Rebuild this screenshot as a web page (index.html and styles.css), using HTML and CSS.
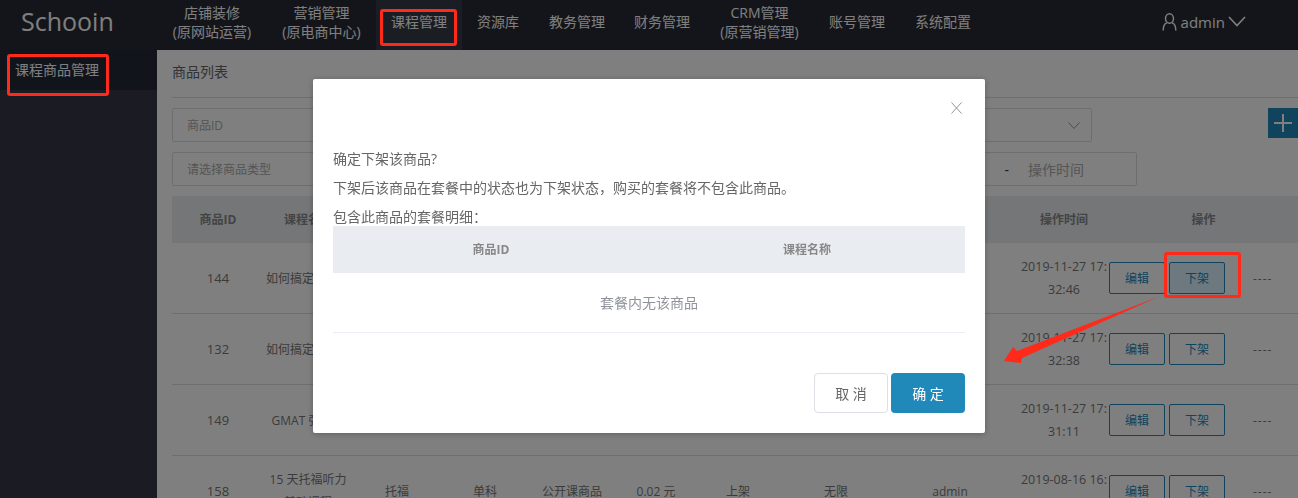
FILE: index.html
```html
<!DOCTYPE html>
<html>
<head>
  <meta charset="UTF-8">
  <title>Schooin - 课程商品管理</title>
  <link rel="stylesheet" href="styles.css">
</head>
<body>
  <header class="top-bar">
    <div class="logo">Schooin</div>
    <nav class="top-nav">
      <a class="wide-a">店铺装修<br>(原网站运营)</a>
      <a class="wide-b">营销管理<br>(原电商中心)</a>
      <a class="active">课程管理</a>
      <a>资源库</a>
      <a class="narrow">教务管理</a>
      <a>财务管理</a>
      <a class="wide-b">CRM管理<br>(原营销管理)</a>
      <a>账号管理</a>
      <a>系统配置</a>
    </nav>
    <div class="user">
      <svg width="17" height="18" viewBox="0 0 17 18" fill="none" stroke="currentColor" stroke-width="1.5"><ellipse cx="8.5" cy="5.5" rx="4" ry="4.7"/><path d="M2.2 17.5c0-4.2 2-7 3.6-7.6M14.8 17.5c0-4.2-2-7-3.6-7.6"/></svg>
      <span class="user-name">admin</span>
      <svg width="18" height="11" viewBox="0 0 18 11" fill="none" stroke="currentColor" stroke-width="1.6"><path d="M1 1l8 8.5L17 1"/></svg>
    </div>
  </header>

  <div class="body-wrap">
    <aside class="side-bar">
      <div class="side-item">课程商品管理</div>
    </aside>

    <main class="content">
      <div class="page-title">商品列表</div>

      <div class="filter-row">
        <div class="filter-fields first">
          <div class="field wide">商品ID</div>
          <div class="field grow">
            <svg class="field-arrow" width="12" height="7" viewBox="0 0 12 7" fill="none" stroke="currentColor"><path d="M.5.5l5.5 6 5.5-6"/></svg>
          </div>
        </div>
        <button class="add-btn"><svg width="20" height="20" viewBox="0 0 20 20" stroke="currentColor" stroke-width="2"><path d="M10 1v18M1 10h18"/></svg></button>
      </div>
      <div class="filter-row">
        <div class="filter-fields second">
          <div class="field wide">请选择商品类型</div>
          <div class="field grow date"><span class="dash">-</span><span class="date-end">操作时间</span></div>
        </div>
      </div>

      <div class="grid-table">
        <div class="grid-row head">
          <div>商品ID</div><div>课程名称</div><div></div><div></div><div></div><div></div><div></div><div></div><div></div><div class="time">操作时间</div><div>操作</div>
        </div>
        <div class="grid-row">
          <div>144</div><div>如何搞定听力题</div><div></div><div></div><div></div><div></div><div></div><div></div><div></div><div class="time">2019-11-27 17:<br>32:46</div>
          <div class="ops"><button class="btn-line">编辑</button><button class="btn-line hover">下架</button><span class="dashes">----</span></div>
        </div>
        <div class="grid-row">
          <div>132</div><div>如何搞定口语题</div><div></div><div></div><div></div><div></div><div></div><div></div><div></div><div class="time">2019-11-27 17:<br>32:38</div>
          <div class="ops"><button class="btn-line">编辑</button><button class="btn-line">下架</button><span class="dashes">----</span></div>
        </div>
        <div class="grid-row">
          <div>149</div><div>GMAT 强化班</div><div></div><div></div><div></div><div></div><div></div><div></div><div></div><div class="time">2019-11-27 17:<br>31:11</div>
          <div class="ops"><button class="btn-line">编辑</button><button class="btn-line">下架</button><span class="dashes">----</span></div>
        </div>
        <div class="grid-row">
          <div>158</div><div>15 天托福听力<br>基础课程</div><div>托福</div><div>单科</div><div>公开课商品</div><div>0.02 元</div><div>上架</div><div>无限</div><div>admin</div><div class="time">2019-08-16 16:<br>20:15</div>
          <div class="ops"><button class="btn-line">编辑</button><button class="btn-line">下架</button><span class="dashes">----</span></div>
        </div>
      </div>
    </main>
  </div>

  <div class="overlay">
    <div class="modal">
      <div class="modal-close">
        <svg width="11" height="12" viewBox="0 0 11 12" fill="none" stroke="currentColor"><path d="M.5.5l10 11M10.5.5l-10 11"/></svg>
      </div>
      <div class="modal-body">
        <p>确定下架该商品?</p>
        <p>下架后该商品在套餐中的状态也为下架状态&#xFF0C;购买的套餐将不包含此商品。</p>
        <p>包含此商品的套餐明细&#xFF1A;</p>
        <div class="modal-table">
          <div class="modal-head"><div>商品ID</div><div>课程名称</div></div>
          <div class="modal-empty">套餐内无该商品</div>
        </div>
      </div>
      <div class="modal-foot">
        <button class="btn-cancel">取 消</button>
        <button class="btn-ok">确 定</button>
      </div>
    </div>
  </div>

  <!-- red marks drawn on top of the screenshot -->
  <div class="mark mark-nav"></div>
  <div class="mark mark-side"></div>
  <div class="mark mark-op"></div>
  <svg class="mark-arrow" width="1298" height="498" viewBox="0 0 1298 498"><polygon fill="#ff2a1a" points="1004,361 1013,347 1017,351 1158,297 1022,358 1021,363"/></svg>
</body>
</html>
```

FILE: styles.css
```css
* { box-sizing: border-box; }
html, body { height: 100%; }
body {
  margin: 0;
  overflow: hidden;
  background: #fff;
  color: #666;
  font-family: "Open Sans", "Noto Sans CJK SC", sans-serif;
  font-size: 14px;
}
button { font-family: inherit; cursor: pointer; }

/* --- TOP BAR --- */
.top-bar {
  display: flex;
  align-items: center;
  height: 50px;
  background: #282a34;
  color: #fff;
}
.logo {
  width: 157px;
  padding: 0 0 9px 21px;
  font-size: 25px;
}
.top-nav { display: flex; height: 100%; }
.top-nav a {
  display: flex;
  align-items: center;
  justify-content: center;
  padding: 0 15px 7px;
  line-height: 19px;
  text-align: center;
}
.top-nav a.wide-a { width: 110px; }
.top-nav a.wide-b { width: 109px; }
.top-nav a.narrow { padding-right: 14px; }
.top-nav a.active { background: #363a48; }
.user {
  display: flex;
  align-items: center;
  gap: 3px;
  margin-left: auto;
  margin-bottom: 7px;
  padding-right: 52px;
}
.user-name { font-size: 15px; }

/* --- LAYOUT --- */
.body-wrap { display: flex; height: 448px; }
.side-bar { flex: 0 0 157px; background: #343647; color: #fff; }
.side-item {
  height: 40px;
  padding-left: 15px;
  line-height: 40px;
  background: #242838;
}
.content { flex: 1; min-width: 0; padding-left: 15px; overflow: hidden; }
.page-title {
  height: 48px;
  padding-top: 12px;
  line-height: 20px;
  border-bottom: 1px solid #ddd;
  margin-bottom: 10px;
}

/* --- FILTERS --- */
.filter-row { display: flex; height: 34px; margin-bottom: 10px; }
.filter-fields { display: flex; gap: 10px; }
.filter-fields.first { width: 920px; }
.filter-fields.second { width: 965px; }
.field {
  position: relative;
  border: 1px solid #ddd;
  border-radius: 2px;
  padding-left: 15px;
  line-height: 33px;
  font-size: 12px;
  color: #aaa;
}
.field.wide { flex: 0 0 300px; padding-left: 14px; }
.field.grow { flex: 1; }
.field-arrow { position: absolute; right: 11px; top: 13px; color: #999; }
.field.date { display: flex; justify-content: flex-end; padding-right: 52px; font-size: 14px; }
.dash { margin-right: 19px; color: #333; }
.add-btn {
  display: flex;
  align-items: center;
  justify-content: center;
  flex: 0 0 30px;
  height: 30px;
  margin-left: auto;
  padding: 0;
  border: 0;
  background: #2089ba;
  color: #fff;
}

/* --- TABLE --- */
.grid-row {
  display: grid;
  grid-template-columns: 92px 88px 90px 86px 88px 80px 84px 112px 116px 112px 1fr;
  align-items: center;
  height: 71px;
  border-bottom: 1px solid #ddd;
  text-align: center;
  font-size: 12px;
  line-height: 23px;
  color: #777;
}
.grid-row.head {
  height: 47px;
  border-bottom: 0;
  background: #e9ecf0;
  font-weight: bold;
  color: #888;
}
.grid-row > div:first-child { font-size: 13px; }
.grid-row.head > div:first-child { font-size: 12px; }
.time { padding: 0 11px; font-size: 12.5px; white-space: nowrap; }
.head .time { font-size: 12px; }
.head .time + div { margin-left: -11px; }
.ops { display: flex; align-items: center; margin-left: -11px; }
.btn-line {
  width: 56px;
  height: 32px;
  margin-right: 4px;
  padding: 0;
  border: 1px solid #2089ba;
  border-radius: 2px;
  background: transparent;
  font-size: 12px;
  color: #2089ba;
}
.btn-line.hover { background: #dcf0ff; }
.dashes { margin-left: 24px; letter-spacing: 1px; }

/* --- MODAL --- */
.overlay {
  position: fixed;
  top: 0;
  left: 0;
  right: 0;
  bottom: 0;
  display: flex;
  justify-content: center;
  align-items: flex-start;
  padding-top: 79px;
  background: rgba(0, 0, 0, .5);
}
.modal {
  width: 672px;
  height: 354px;
  padding: 0 20px;
  border-radius: 2px;
  background: #fff;
  box-shadow: 0 1px 6px rgba(0, 0, 0, .25);
}
.modal-close {
  display: flex;
  justify-content: flex-end;
  height: 70px;
  padding: 23px 3px 0 0;
  color: #8e959f;
}
.modal-body p { margin: 0 0 9px; line-height: 20px; color: #666; }
.modal-body p:last-of-type { margin-bottom: 0; line-height: 19px; }
.modal-head {
  display: grid;
  grid-template-columns: 1fr 1fr;
  height: 47px;
  line-height: 47px;
  background: #e9ecf0;
  text-align: center;
  font-size: 12px;
  font-weight: bold;
  color: #888;
}
.modal-empty {
  height: 60px;
  line-height: 60px;
  border-bottom: 1px solid #eceef3;
  text-align: center;
  color: #8f9399;
}
.modal-foot {
  display: flex;
  justify-content: flex-end;
  gap: 3px;
  margin-top: 40px;
}
.modal-foot button {
  width: 74px;
  height: 40px;
  border-radius: 4px;
  font-size: 14px;
}
.btn-cancel { border: 1px solid #dddee6; background: #fff; color: #666; }
.btn-ok { border: 0; background: #2089ba; color: #fff; }

/* --- RED MARKS --- */
.mark {
  position: absolute;
  border: 3px solid #ff2a1a;
  border-radius: 3px;
}
.mark-nav { left: 380px; top: 9px; width: 77px; height: 37px; }
.mark-side { left: 7px; top: 54px; width: 102px; height: 42px; }
.mark-op { left: 1164px; top: 252px; width: 77px; height: 46px; }
.mark-arrow { position: absolute; left: 0; top: 0; pointer-events: none; }
```
